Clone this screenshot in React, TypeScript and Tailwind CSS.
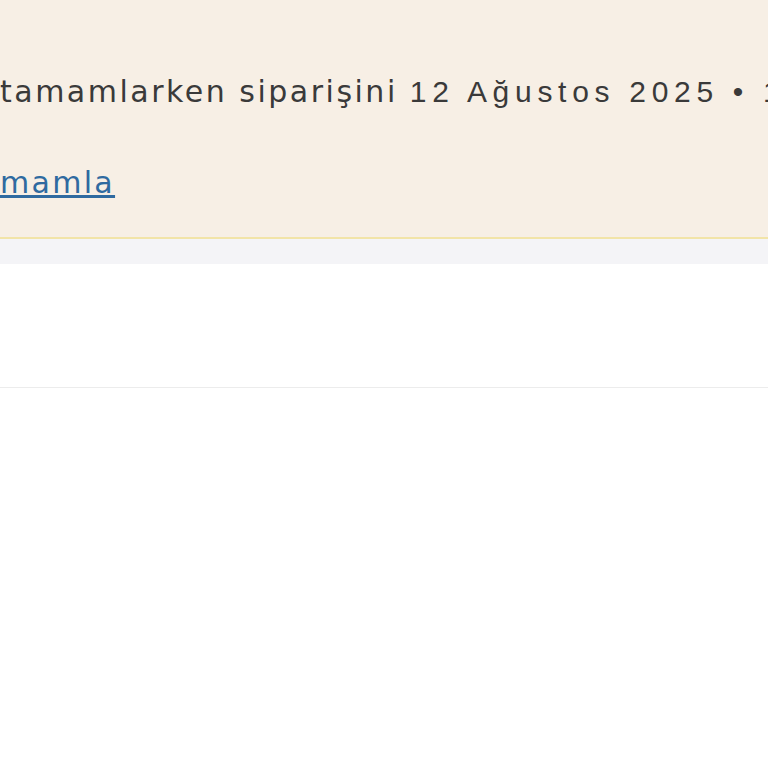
import React from 'react';

export default function App() {
  return (
    <div className="min-h-[768px] w-[768px] overflow-hidden bg-white" style={{ fontFamily: '"Liberation Sans", Arial, sans-serif' }}>
      <div className="h-[239px] bg-[#f7efe5] border-b-2 border-[#f2e4a8] overflow-hidden">
        <div className="pt-[74px] flex flex-col gap-[55px]">
          <p className="whitespace-nowrap text-[30px] leading-[36px] text-[#3a3a3a]">
            <span className="tracking-[2.5px] font-['DejaVu_Sans',sans-serif]">tamamlarken siparişini </span>
            <span className="tracking-[5.7px]">12 Ağustos 2025 • 14:00</span>
          </p>
          <a href="#" className="whitespace-nowrap text-[30px] leading-[36px] tracking-[2.3px] font-['DejaVu_Sans',sans-serif] text-[#2f6aa0] underline underline-offset-2">
            mamla
          </a>
        </div>
      </div>
      <div className="h-[25px] bg-[#f4f4f7]" />
      <div className="h-[124px] bg-white border-b border-[#ececec]" />
      <div className="bg-white" />
    </div>
  );
}
